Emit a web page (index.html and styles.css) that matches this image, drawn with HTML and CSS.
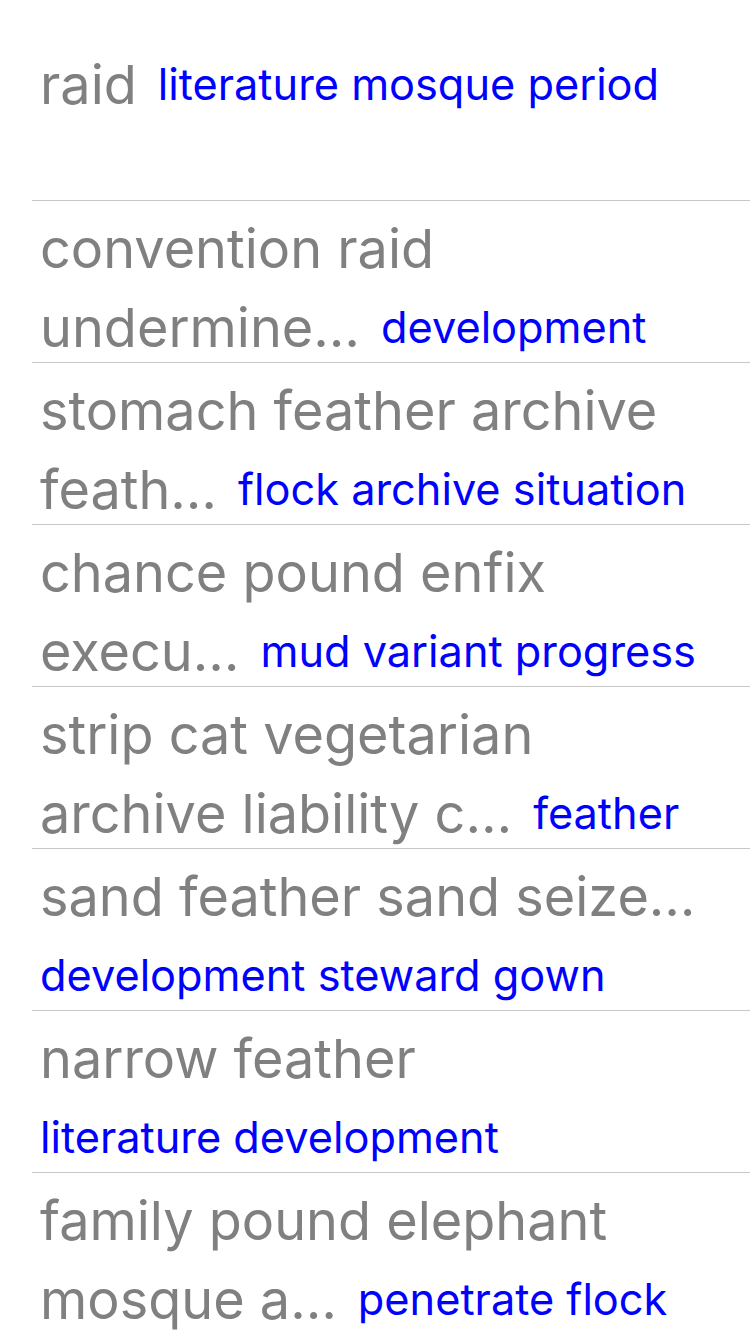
FILE: index.html
```html
<!DOCTYPE html>
<html>
<head>
<meta charset="utf-8">
<link rel="stylesheet" href="styles.css">
</head>
<body>
<div class="list">
  <div class="row first"><p class="cell"><span class="title">raid</span><span class="tag">literature mosque period</span></p></div>
  <div class="row"><p class="cell"><span class="title">convention raid<br>undermine…</span><span class="tag">development</span></p></div>
  <div class="row"><p class="cell"><span class="title">stomach feather archive<br>feath…</span><span class="tag">flock archive situation</span></p></div>
  <div class="row"><p class="cell"><span class="title">chance pound enfix<br>execu…</span><span class="tag">mud variant progress</span></p></div>
  <div class="row"><p class="cell"><span class="title">strip cat vegetarian<br>archive liability c…</span><span class="tag">feather</span></p></div>
  <div class="row"><p class="cell"><span class="title">sand feather sand seize…</span><br><span class="tag solo">development steward gown</span></p></div>
  <div class="row"><p class="cell"><span class="title">narrow feather</span><br><span class="tag solo">literature development</span></p></div>
  <div class="row"><p class="cell"><span class="title">family pound elephant<br>mosque a…</span><span class="tag">penetrate flock</span></p></div>
</div>
</body>
</html>
```

FILE: styles.css
```css
html, body {
  margin: 0;
  padding: 0;
  background: #ffffff;
}
body {
  font-family: Inter, "Noto Sans", sans-serif;
  width: 750px;
  height: 1334px;
  overflow: hidden;
}
.list {
  padding-top: 37px;
}
.row {
  height: 161px;
  margin-left: 32px;
  border-bottom: 1px solid #c8c8c8;
  padding-left: 8px;
}
.row.first {
  height: 163px;
}
.cell {
  margin: 0;
  padding-top: 8px;
  font-size: 54px;
  line-height: 79px;
  white-space: nowrap;
}
.title {
  color: #808080;
}
.tag {
  font-size: 43.3px;
  line-height: 1;
  color: #0000ff;
  margin-left: 21px;
  vertical-align: 4px;
}
.tag.solo {
  margin-left: 0;
}
```
